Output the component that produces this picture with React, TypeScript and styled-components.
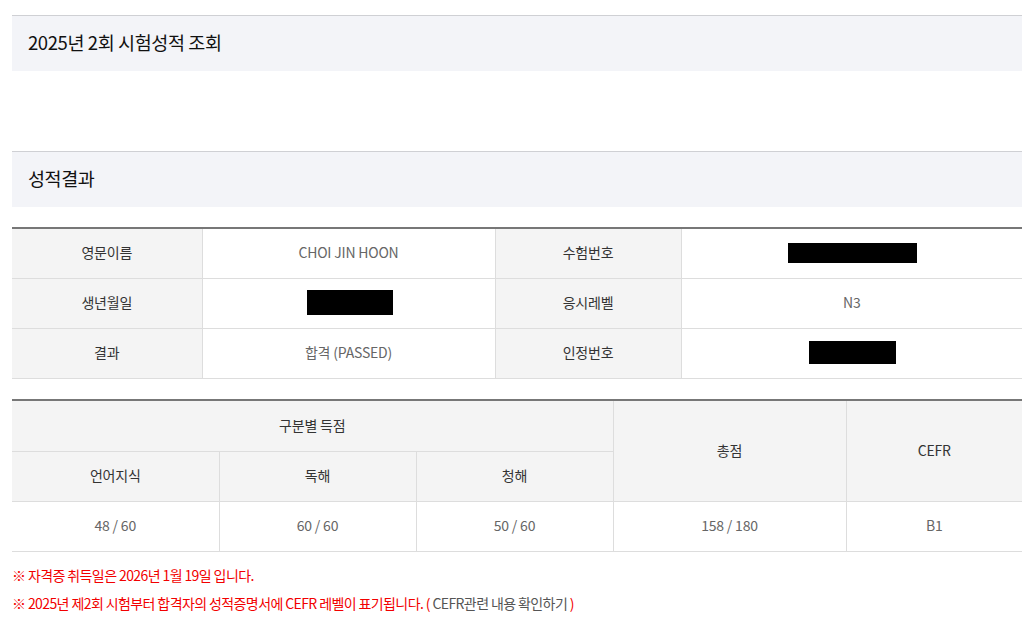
import React from 'react';
import styled, { createGlobalStyle } from 'styled-components';

const GlobalStyle = createGlobalStyle`
  body {
    margin: 0;
    background: #fff;
    font-family: "Noto Sans CJK KR", "Noto Sans", sans-serif;
    color: #222;
  }
`;

const Page = styled.div`
  width: 1010px;
  margin: 15px 0 0 12px;
`;

const SectionTitle = styled.h2<{ $gap?: number }>`
  box-sizing: border-box;
  margin: ${(p) => p.$gap ?? 0}px 0 0;
  height: 56px;
  display: flex;
  align-items: center;
  padding: 0 0 3px 16px;
  border-top: 1px solid #cfd0d4;
  background: #f3f4f8;
  font-size: 18.5px;
  font-weight: 400;
  letter-spacing: -0.4px;
  color: #111;
`;

const Table = styled.table<{ $gap: number }>`
  width: 100%;
  margin-top: ${(p) => p.$gap}px;
  border-collapse: collapse;
  border-top: 2px solid #777;
  table-layout: fixed;
  font-size: 14px;
  letter-spacing: -0.2px;
`;

const Th = styled.th<{ $h?: number }>`
  height: ${(p) => (p.$h ?? 49) - 3}px;
  padding: 0 0 3px;
  background: #f4f4f4;
  border: 1px solid #ddd;
  border-top: none;
  font-weight: 400;
  color: #333;
  text-align: center;
  &:first-child {
    border-left: none;
  }
  &:last-child {
    border-right: none;
  }
`;

const Td = styled.td`
  height: 46px;
  padding: 0 0 3px;
  background: #fff;
  border: 1px solid #ddd;
  border-top: none;
  color: #666;
  text-align: center;
  &:first-child {
    border-left: none;
  }
  &:last-child {
    border-right: none;
  }
`;

const Redacted = styled.span<{ $w: number; $h: number; $dx?: number }>`
  display: inline-block;
  vertical-align: middle;
  width: ${(p) => p.$w}px;
  height: ${(p) => p.$h}px;
  margin-left: ${(p) => p.$dx ?? 0}px;
  background: #000;
`;

const Notes = styled.div`
  margin-top: 9px;
  font-size: 14px;
  letter-spacing: -0.6px;
  color: #f20000;
  line-height: 28px;
`;

const Note = styled.p`
  margin: 0;
`;

const LinkText = styled.span`
  color: #555;
`;

export default function App() {
  return (
    <>
      <GlobalStyle />
      <Page>
        <SectionTitle>2025년 2회 시험성적 조회</SectionTitle>
        <SectionTitle $gap={80}>성적결과</SectionTitle>

        <Table $gap={20}>
          <colgroup>
            <col style={{ width: 190 }} />
            <col style={{ width: 293 }} />
            <col style={{ width: 186 }} />
            <col />
          </colgroup>
          <tbody>
            <tr>
              <Th>영문이름</Th>
              <Td>CHOI JIN HOON</Td>
              <Th>수험번호</Th>
              <Td>
                <Redacted $w={129} $h={20} $dx={2} />
              </Td>
            </tr>
            <tr>
              <Th>생년월일</Th>
              <Td>
                <Redacted $w={86} $h={25} $dx={3} />
              </Td>
              <Th>응시레벨</Th>
              <Td>N3</Td>
            </tr>
            <tr>
              <Th>결과</Th>
              <Td>합격 (PASSED)</Td>
              <Th>인정번호</Th>
              <Td>
                <Redacted $w={87} $h={23} $dx={2} />
              </Td>
            </tr>
          </tbody>
        </Table>

        <Table $gap={20}>
          <colgroup>
            <col style={{ width: 207 }} />
            <col style={{ width: 197 }} />
            <col style={{ width: 197 }} />
            <col style={{ width: 233 }} />
            <col />
          </colgroup>
          <thead>
            <tr>
              <Th colSpan={3} $h={50}>
                구분별 득점
              </Th>
              <Th rowSpan={2}>총점</Th>
              <Th rowSpan={2}>CEFR</Th>
            </tr>
            <tr>
              <Th>언어지식</Th>
              <Th>독해</Th>
              <Th>청해</Th>
            </tr>
          </thead>
          <tbody>
            <tr>
              <Td>48 / 60</Td>
              <Td>60 / 60</Td>
              <Td>50 / 60</Td>
              <Td>158 / 180</Td>
              <Td>B1</Td>
            </tr>
          </tbody>
        </Table>

        <Notes>
          <Note>※ 자격증 취득일은 2026년 1월 19일 입니다.</Note>
          <Note>
            ※ 2025년 제2회 시험부터 합격자의 성적증명서에 CEFR 레벨이 표기됩니다. ({' '}
            <LinkText>CEFR관련 내용 확인하기</LinkText> )
          </Note>
        </Notes>
      </Page>
    </>
  );
}
